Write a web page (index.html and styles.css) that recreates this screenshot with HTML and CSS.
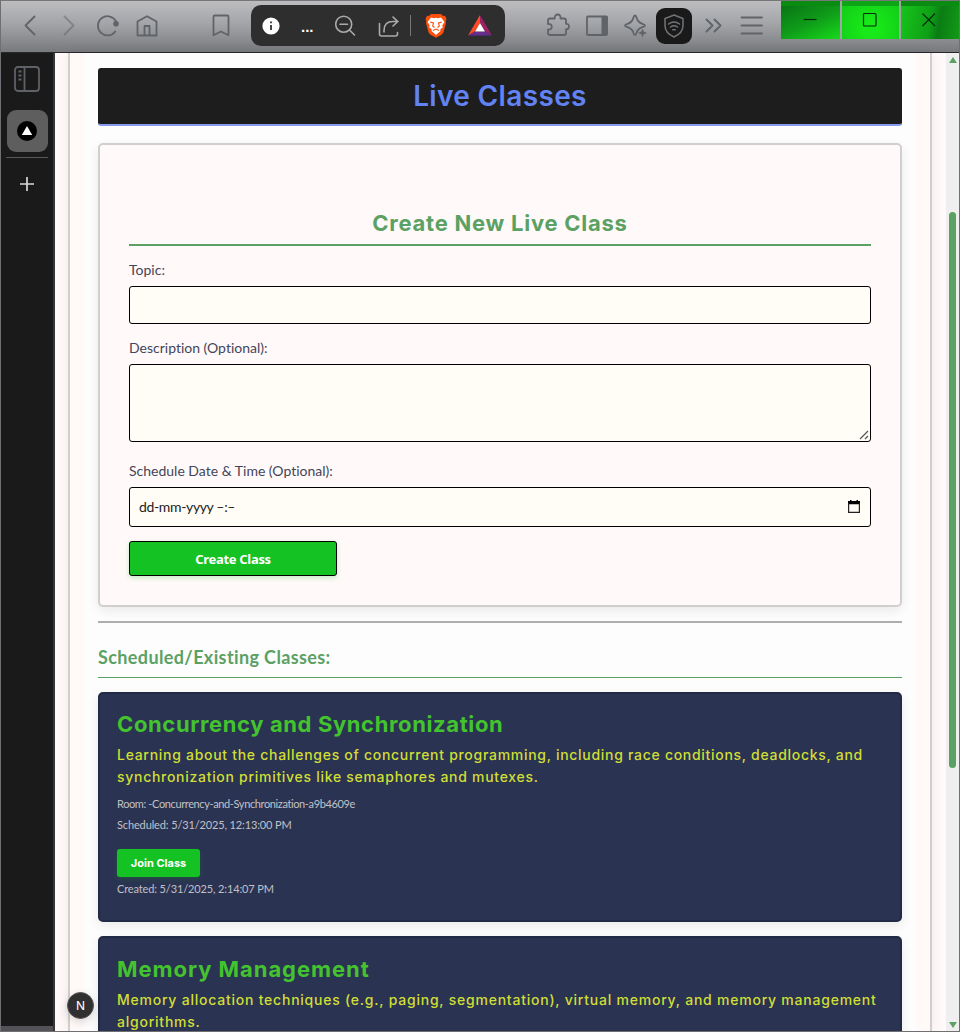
FILE: index.html
```html
<!DOCTYPE html>
<html lang="en">
<head>
<meta charset="utf-8">
<title>Live Classes</title>
<link rel="stylesheet" href="styles.css">
</head>
<body>
<div class="window">
  <header class="toolbar">
    <nav class="nav-icons">
      <svg class="slot" viewBox="0 0 39 40"><path d="M23.5 10.5 14.5 19.5l9 9"/></svg>
      <svg class="slot dim" viewBox="0 0 39 40"><path d="M14.5 10.5 23.5 19.5l-9 9"/></svg>
      <svg class="slot" viewBox="0 0 39 40"><path d="M26.3 25.5a9.600 9.600 0 1 1 .8-10"/><circle class="solid" cx="27" cy="17.700" r="2.800"/></svg>
      <svg class="slot" viewBox="0 0 39 40"><path d="M9.5 15.5 19 10.2l9.5 5.3v14h-19zM16.5 29.5v-9.5h5v9.5"/></svg>
    </nav>
    <svg class="slot bookmark" viewBox="0 0 39 40"><path d="M11.5 10.7q0-1.2 1.2-1.2h12.6q1.2 0 1.2 1.2v18.5L19 25.500l-7.5 3.700z"/></svg>
    <div class="address">
      <svg class="info" viewBox="0 0 18 18"><circle cx="9" cy="9" r="8.6" fill="#fff"/><path d="M9 8v5M9 4.5v1.8" stroke="#333" stroke-width="1.8"/></svg>
      <span class="dots">...</span>
      <svg class="zoom" viewBox="0 0 22 22"><circle cx="9.7" cy="9.2" r="8"/><path d="M6 9.2h7.5M15.5 15l5 5"/></svg>
      <svg class="share" viewBox="0 0 22 22"><path d="M1.5 7.5v10.5q0 2 2 2h14q2 0 2-2v-1.5M6 16v-1.5q0-9 9-9h4.5M15 1l4.8 4.6L15 10"/></svg>
      <span class="divider"></span>
      <svg class="brave" viewBox="0 0 22 25"><path fill="#fb4f0c" d="M6 1h10l2 2 2-.2L21.5 6l-.8 2.2.3 2-2.3 8.3q-.5 2-2.2 3.2L11 24.800l-5.500-3.100q-1.700-1.200-2.200-3.200L1 10.200l.3-2L.5 6 2 2.800 4 3z"/><path fill="#fff" d="M6 4.500l3 .7 2-.5 2 .5 3-.7L19.500 9l-2.200 3.200.5 2.200-2.500 1.800.2 1.800-4.500 4-4.500-4 .2-1.800-2.500-1.800.5-2.200L2.500 9z"/><path d="M5 9l3.500 1-.8 3 1.800 1.500M17 9l-3.500 1 .8 3-1.800 1.500M8 17.500l3-1.500 3 1.500" fill="none" stroke="#fb4f0c" stroke-width="1.100"/></svg>
      <svg class="bat" viewBox="0 0 24 21"><path fill="#ff4a25" d="M12 0v8L6.800 16.500 0 20.500z"/><path fill="#9e1f63" d="M12 0l12 20.500-6.800-4L12 8z"/><path fill="#662d91" d="M0 20.500l7-4h10l7 4z"/><path fill="#fff" d="M12 8l5 8.500H7z"/></svg>
    </div>
    <div class="tools">
      <svg class="slot" viewBox="0 0 39 40"><path d="M11 12.500q-2 0-2 2v3.500q3.800-.3 3.800 2.800T9 23.500v3.500q0 2 2 2h14q2 0 2-2v-3.500q3-.2 3-3t-3-2.700V14.500q0-2-2-2h-3.500q.3-4-2.800-4t-3 4z"/></svg>
      <svg class="slot" viewBox="0 0 39 40"><rect x="9" y="10.500" width="20" height="18.500" rx="1"/><path class="solid" d="M23.500 10h6v19h-6z"/></svg>
      <svg class="slot" viewBox="0 0 39 40"><path d="M18 9.500q1 0 1.500 2 1.200 4.800 6 6.300 2.500.8 2.500 1.700t-2.500 1.600q-4.800 1.500-6 6-.5 2-1.500 2t-1.500-2q-1.200-4.500-6-6Q8 20.400 8 19.500t2.500-1.700q4.800-1.500 6-6.300.5-2 1.500-2z"/><path class="solid" d="M25.500 22.500l1.300 3L30 27l-3.200 1.300-1.300 3.200-1.300-3.200L21 27l3.200-1.500z"/></svg>
      <span class="shield"><svg viewBox="0 0 24 26"><path d="M12 2l9 3.500v7q0 7.500-9 11.500-9-4-9-11.500v-7z"/><path d="M6.500 11q5.500-4 11 0M8.500 14q3.500-2.600 7 0M10.700 16.800q1.300-.8 2.600 0"/></svg></span>
      <svg class="slot" viewBox="0 0 39 40"><path d="M12.500 13.500l6 6-6 6M20.500 13.500l6 6-6 6"/></svg>
      <svg class="slot" viewBox="0 0 39 40"><path d="M8.500 11.500h20.500M8.500 19.500h20.500M8.500 27.500h20.500"/></svg>
    </div>
    <div class="controls">
      <span class="control left"><svg viewBox="0 0 16 16"><path d="M1.500 8.500h13"/></svg></span>
      <span class="control middle"><svg viewBox="0 0 16 16"><rect x="1.500" y="2.500" width="12.500" height="12.500" rx="1"/></svg></span>
      <span class="control right"><svg viewBox="0 0 16 16"><path d="M1.500 2.500l12.500 12.500M14 2.500L1.500 15"/></svg></span>
    </div>
  </header>

  <div class="body">
    <aside class="sidebar">
      <svg class="panel" viewBox="0 0 26 26"><rect x="1" y="1" width="24" height="24" rx="3"/><path d="M10.500 1v24M4.500 5.500h3M4.500 9.500h3M4.500 13.500h3"/></svg>
      <span class="tab"><svg viewBox="0 0 20 20"><circle cx="10" cy="10" r="10" fill="#000"/><path fill="#fff" d="M10 5l5.200 9H4.800z"/></svg></span>
      <span class="rule"></span>
      <svg class="plus" viewBox="0 0 14 14"><path d="M7 0v14M0 7h14"/></svg>
      <span class="foot"></span>
    </aside>

    <div class="page">
      <div class="frame">
        <main class="content">
          <h1 class="title"><span>Live Classes</span></h1>
          <section class="form">
            <h2 class="form-title"><span>Create New Live Class</span></h2>
            <div class="label"><span class="l1">Topic:</span></div>
            <div class="field topic"></div>
            <div class="label"><span class="l2">Description (Optional):</span></div>
            <div class="field area"><svg viewBox="0 0 10 10"><path d="M1 9l8-8M6 9l3-3"/></svg></div>
            <div class="label"><span class="l3">Schedule Date &amp; Time (Optional):</span></div>
            <div class="field date"><span>dd-mm-yyyy –:–</span><svg viewBox="0 0 12 13"><path fill="#000" d="M0 1h12v3.200H0zM2 0h1.500v2H2zM8.500 0H10v2H8.500z"/><path d="M.6 3v9.300h10.800V3" fill="none" stroke="#222" stroke-width="1.200"/></svg></div>
            <button class="create"><span>Create Class</span></button>
          </section>
          <div class="separator"></div>
          <h3 class="list-title"><span>Scheduled/Existing Classes:</span></h3>
          <article class="card">
            <h4><span class="n1">Concurrency and Synchronization</span></h4>
            <p class="desc"><span class="d1">Learning about the challenges of concurrent programming, including race conditions, deadlocks, and</span><br><span class="d2">synchronization primitives like semaphores and mutexes.</span></p>
            <p class="meta"><span class="m1">Room: -Concurrency-and-Synchronization-a9b4609e</span></p>
            <p class="meta"><span class="m2">Scheduled: 5/31/2025, 12:13:00 PM</span></p>
            <button class="join"><span>Join Class</span></button>
            <p class="meta created"><span class="m3">Created: 5/31/2025, 2:14:07 PM</span></p>
          </article>
          <article class="card second">
            <h4><span class="n2">Memory Management</span></h4>
            <p class="desc"><span class="d3">Memory allocation techniques (e.g., paging, segmentation), virtual memory, and memory management</span><br><span class="d4">algorithms.</span></p>
          </article>
        </main>
      </div>
      <div class="scrollbar"><span class="up"></span><span class="thumb"></span><span class="down"></span></div>
    </div>
  </div>
  <div class="badge">N</div>
</div>
</body>
</html>
```
FILE: styles.css
```css
* { box-sizing: border-box; }
body { margin: 0; font-family: Lato, "Liberation Sans", sans-serif; font-variant-ligatures: none; }
h1, h2, h3, h4, p { margin: 0; }
span { white-space: nowrap; }
svg { display: block; flex: none; }

.window { position: relative; width: 960px; height: 1032px; overflow: hidden; display: flex; flex-direction: column; border: 1px solid #6f6f72; border-top-color: #77777a; }

.toolbar { flex: none; height: 52px; display: flex; padding: 0; background: linear-gradient(#bdbdc0, #a2a4a7 45%, #8b8d90 75%, #77797c); border-bottom: 1px solid #28282c; }
.slot { width: 39px; height: 40px; margin-top: 5px; fill: none; stroke: #606469; stroke-width: 1.8; stroke-linejoin: round; stroke-linecap: round; }
.slot .solid { fill: #606469; stroke: none; }
.dim { opacity: .5; }
.nav-icons { display: flex; width: 191px; padding-left: 10px; }
.bookmark { margin-left: 10px; }
.address { flex: none; display: flex; align-items: center; width: 254px; height: 41px; margin: 4px 0 0 10px; padding-left: 11px; border-radius: 10px; background: #2e2e2e; }
.info { width: 18px; height: 18px; }
.dots { width: 14px; margin-left: 21px; padding-top: 2px; color: #fff; font: 700 15px/20px "Liberation Sans", sans-serif; }
.zoom { width: 22px; height: 22px; margin-left: 19px; }
.share { width: 22px; height: 22px; margin: 2px 0 0 22px; }
.zoom, .share { fill: none; stroke: #aaa; stroke-width: 1.6; stroke-linecap: round; }
.divider { width: 1px; height: 21px; margin-left: 10px; background: #777; }
.brave { width: 22px; height: 25px; margin-left: 14px; }
.bat { width: 24px; height: 21px; margin-left: 21px; }
.tools { flex: none; display: flex; width: 276px; padding-left: 34px; }
.shield { flex: none; width: 36px; height: 36px; margin: 7px 2px 0 0; padding: 5px 6px; border-radius: 9px; background: #1a1a1a; }
.shield svg { width: 24px; height: 26px; fill: none; stroke: #727578; stroke-width: 1.5; stroke-linecap: round; }
.controls { flex: none; display: flex; gap: 2px; width: 178px; height: 38px; background: #a2a4a7; }
.control { flex: 1; padding: 10px 0 0 21px; border-top: 5px solid #0a8b12; }
.control svg { width: 16px; height: 16px; margin-top: -5px; fill: none; stroke: #062c0b; stroke-width: 1.2; }
.left { background: linear-gradient(155deg, #097516, #0f9c19 50%, #17db1a); }
.middle { padding-left: 20px; background: radial-gradient(circle at 50% 70%, #18e918 20%, #12cc18); border-top-color: #0da516; }
.right { padding-left: 20px; background: linear-gradient(100deg, #16c41a, #0f9f17 50%, #0b7c13 65%, #129a18); }

.body { flex: 1; min-height: 0; display: flex; }
.sidebar { flex: none; width: 54px; display: flex; flex-direction: column; align-items: center; padding-top: 13px; background: #1a1a1a; border-right: 2px solid #35353a; }
.panel { width: 26px; height: 26px; fill: none; stroke: #5e6267; stroke-width: 1.8; }
.tab { width: 41px; height: 42px; margin-top: 18px; padding: 11px 10px; border-radius: 9px; background: #5e5e5e; }
.tab svg { width: 20px; height: 20px; }
.rule { width: 42px; height: 1px; margin-top: 5px; background: #57575a; }
.plus { width: 14px; height: 14px; margin-top: 19px; stroke: #d8d8d8; stroke-width: 1.7; }
.foot { width: 100%; height: 5px; margin-top: auto; background: #535357; }

.page { flex: 1; min-width: 0; display: flex; background: #fffaf9; }
.frame { width: 864px; margin-left: 13px; padding: 0 14px; border: solid #d1cece; border-width: 0 2px; background: #fffaf8; box-shadow: 0 0 12px rgba(0,0,0,.08); }
.content { height: 100%; overflow: hidden; padding: 15px 14px 0; background: #fdfdfd; }

.title { height: 58px; display: flex; justify-content: center; border-bottom: 2px solid #879aed; border-radius: 3px; background: #1d1d1d; color: #6283f4; font: 600 28px/56px Inter, sans-serif; letter-spacing: .35px; }
.form { height: 464px; margin-top: 17px; padding: 61px 29px 0; border: 2px solid #d1cece; border-radius: 5px; background: #fffaf9; box-shadow: 0 4px 12px rgba(0,0,0,.08); }
.form-title { height: 40px; display: flex; justify-content: center; border-bottom: 2px solid #5ba163; color: #5ba163; font: 700 22px/35px Inter, sans-serif; letter-spacing: .75px; }
.label { height: 40px; color: #44445a; font-size: 14px; line-height: 47px; }
.field { border: 1px solid #000; border-radius: 3px; background: #fffdf5; }
.topic { height: 38px; }
.area { height: 78px; margin-bottom: 5px; display: flex; align-items: flex-end; justify-content: flex-end; padding: 1px; }
.area svg { width: 10px; height: 10px; fill: none; stroke: #555; stroke-width: 1.2; }
.date { height: 40px; display: flex; align-items: center; justify-content: space-between; padding: 0 10px 2px 9px; color: #222; font-size: 14px; letter-spacing: -.35px; }
.date svg { width: 12px; height: 13px; }
.create { display: block; width: 208px; height: 35px; margin-top: 14px; padding: 0; border: 1px solid #000; border-radius: 3px; background: #15c224; color: #fff; font: 700 13px/35px "Noto Sans", sans-serif; letter-spacing: -.3px; box-shadow: 0 2px 5px rgba(20,190,35,.25); }
.separator { height: 2px; margin-top: 14px; background: #aeaeae; }
.list-title { height: 55px; border-bottom: 1px solid #5ba163; color: #5ba163; font-size: 18px; line-height: 68px; letter-spacing: .38px; }
.card { height: 230px; margin-top: 14px; padding: 14px 17px 0; border: 2px solid #222b45; border-radius: 5px; background: #2b3352; box-shadow: 0 4px 12px rgba(0,0,0,.08); }
.second { padding-top: 15px; }
.card h4 { height: 36px; color: #43c32e; font: 700 22px/32px Inter, sans-serif; }
.n1 { letter-spacing: .62px; }
.n2 { letter-spacing: .95px; }
.desc { height: 49px; color: #d0df35; font: 500 14px/22px Inter, sans-serif; letter-spacing: .71px; }
.d3, .d4 { letter-spacing: .77px; }
.meta { height: 21px; color: #c0c1c8; font-size: 11px; line-height: 21px; letter-spacing: -.13px; }
.m1 { letter-spacing: -.38px; }
.join { display: block; width: 83px; height: 28px; margin-top: 14px; padding: 0; border: 0; border-radius: 3px; background: #15c224; color: #fff; font: 700 11px/28px Inter, sans-serif; box-shadow: 0 2px 5px rgba(20,190,35,.2); }
.created { margin-top: 1px; }

.scrollbar { flex: none; display: flex; flex-direction: column; align-items: center; width: 13px; margin-left: auto; padding-top: 4px; background: #efefef; }
.up { border: 4px solid transparent; border-top: 0; border-bottom: 6px solid #5ba163; }
.thumb { width: 7px; height: 556px; margin-top: 149px; border-radius: 4px; background: #5ba163; }
.down { margin-top: auto; margin-bottom: 3px; border: 4px solid transparent; border-bottom: 0; border-top: 6px solid #5ba163; }
.badge { position: absolute; left: 66px; top: 991px; width: 27px; height: 27px; border: 1px solid #555; border-radius: 50%; background: #303030; color: #fff; font: 12px/26px Inter, sans-serif; text-align: center; box-shadow: 0 3px 10px rgba(0,0,0,.15); }
```
